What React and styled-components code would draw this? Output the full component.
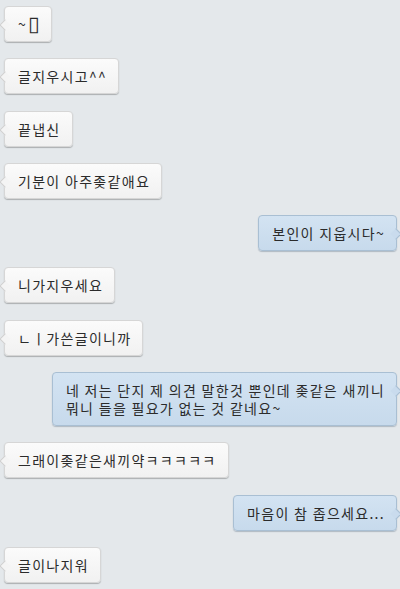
import React from "react";
import styled, { createGlobalStyle, css } from "styled-components";

const Global = createGlobalStyle`
  html, body { margin: 0; padding: 0; background: #e4e8eb; }
  body { font-family: "Noto Sans CJK KR", "Noto Sans", sans-serif; }
`;

const Chat = styled.div`
  width: 400px;
  height: 589px;
  overflow: hidden;
  box-sizing: border-box;
  padding: 6px 3px 0 4px;
  display: flex;
  flex-direction: column;
  gap: 16.3px;
  background: #e4e8eb;
`;

const Row = styled.div`
  display: flex;
  justify-content: ${(p) => (p.$mine ? "flex-end" : "flex-start")};
`;

const Bubble = styled.div`
  position: relative;
  box-sizing: border-box;
  min-height: 36px;
  padding: 8px 11px 8px 13px;
  font-size: 14px;
  line-height: 18px;
  letter-spacing: 1.3px;
  color: #2b2b2b;
  border-radius: 4px;
  white-space: pre-line;
  ${(p) =>
    p.$mine
      ? css`
          background: linear-gradient(#d3e3f2, #c7daec);
          border: 1px solid #a9bfd3;
          box-shadow: 0 1px 1px rgba(80, 100, 120, 0.35);
        `
      : css`
          background: linear-gradient(#fbfbfb, #f1f1f1);
          border: 1px solid #d6d6d6;
          box-shadow: 0 1px 1px rgba(0, 0, 0, 0.25);
        `}

  &::before {
    content: "";
    position: absolute;
    top: 14px;
    width: 7px;
    height: 7px;
    transform: rotate(45deg);
    ${(p) =>
      p.$mine
        ? css`
            right: -4px;
            background: #c9dbed;
            border-top: 1px solid #a9bfd3;
            border-right: 1px solid #a9bfd3;
          `
        : css`
            left: -4px;
            background: #f4f4f4;
            border-left: 1px solid #d0d0d0;
            border-bottom: 1px solid #d0d0d0;
          `}
  }
`;

const Tofu = styled.span`
  font-family: "DejaVu Sans", sans-serif;
  font-size: 21px;
  line-height: 0;
  letter-spacing: 0;
  margin-left: 1px;
  vertical-align: -1px;
`;

const messages = [
  { mine: false, text: "~", tofu: true },
  { mine: false, text: "글지우시고^^" },
  { mine: false, text: "끝냅신" },
  { mine: false, text: "기분이 아주좆같애요" },
  { mine: true, text: "본인이 지웁시다~" },
  { mine: false, text: "니가지우세요" },
  { mine: false, text: "ㄴㅣ가쓴글이니까" },
  {
    mine: true,
    text: "네 저는 단지 제 의견 말한것 뿐인데 좆같은 새끼니\n뭐니 들을 필요가 없는 것 같네요~",
  },
  { mine: false, text: "그래이좆같은새끼약ㅋㅋㅋㅋㅋ" },
  { mine: true, text: "마음이 참 좁으세요..." },
  { mine: false, text: "글이나지워" },
];

export default function App() {
  return (
    <>
      <Global />
      <Chat>
        {messages.map((m, i) => (
          <Row key={i} $mine={m.mine}>
            <Bubble $mine={m.mine}>
              {m.text}
              {m.tofu && <Tofu>▯</Tofu>}
            </Bubble>
          </Row>
        ))}
      </Chat>
    </>
  );
}
